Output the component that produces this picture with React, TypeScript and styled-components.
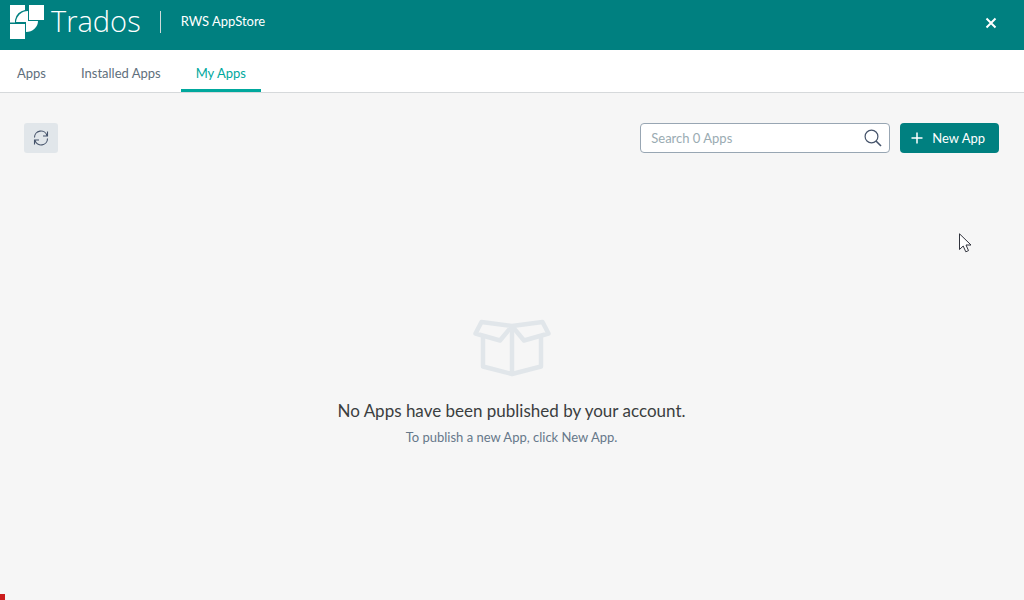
import React from "react";
import styled, { createGlobalStyle } from "styled-components";

const GlobalStyle = createGlobalStyle`
  *, *::before, *::after { box-sizing: border-box; }
  body {
    margin: 0;
    background: #f6f6f6;
    color: #3b3e40;
    font: 13px/20px Lato, "Liberation Sans", sans-serif;
  }
  button, input { font: inherit; }
`;

const Page = styled.div`
  display: flex;
  flex-direction: column;
  min-height: 100vh;
`;

const Header = styled.header`
  display: flex;
  align-items: center;
  height: 50px;
  padding: 0 24px 6px 10px;
  background: #008080;
  color: #fff;
`;

const Brand = styled.a`
  display: flex;
  align-items: center;
  gap: 7px;
  color: inherit;
  text-decoration: none;
  font: 400 28px/32px "Open Sans", sans-serif;
`;

const BrandName = styled.span`
  padding-bottom: 2px;
  font-weight: 350;
  font-size: 29px;
`;

const Divider = styled.span`
  width: 1px;
  height: 22px;
  margin: 0 20px 0 19px;
  background: #cfdada;
`;

const Product = styled.span`
  flex: 1;
  padding-bottom: 2px;
`;

const CloseButton = styled.button`
  display: flex;
  margin: 0;
  padding: 4px 2px 2px;
  border: 0;
  background: none;
  color: inherit;
  cursor: pointer;
`;

const Tabs = styled.nav`
  display: flex;
  gap: 5px;
  height: 43px;
  padding: 0 2px;
  background: #fff;
  border-bottom: 1px solid #d6d9db;
`;

const Tab = styled.a<{ $active?: boolean }>`
  display: flex;
  align-items: center;
  padding: 6px 15px 0;
  border-bottom: 3px solid ${(p) => (p.$active ? "#00a89d" : "transparent")};
  color: ${(p) => (p.$active ? "#00a89d" : "#5f6f7c")};
  text-decoration: none;
`;

const Toolbar = styled.div`
  display: flex;
  align-items: center;
  justify-content: space-between;
  padding: 30px 25px 0 24px;
`;

const RefreshButton = styled.button`
  display: flex;
  align-items: center;
  justify-content: center;
  width: 34px;
  height: 30px;
  padding: 0;
  border: 0;
  border-radius: 3px;
  background: #e1e6ea;
  color: #45536a;
`;

const Actions = styled.div`
  display: flex;
  gap: 10px;
`;

const SearchBox = styled.label`
  display: flex;
  align-items: center;
  width: 250px;
  height: 30px;
  padding: 0 7px 0 10px;
  border: 1px solid #98a6b3;
  border-radius: 4px;
  background: #fff;
  color: #45536a;
`;

const SearchInput = styled.input`
  flex: 1;
  min-width: 0;
  padding: 0;
  border: 0;
  outline: 0;
  background: none;
  &::placeholder { color: #9aabb2; opacity: 1; }
`;

const NewButton = styled.button`
  display: flex;
  align-items: center;
  gap: 9px;
  height: 30px;
  padding: 0 14px 0 11px;
  border: 0;
  border-radius: 4px;
  background: #008080;
  color: #fff;
`;

const Empty = styled.main`
  flex: 1;
  display: flex;
  flex-direction: column;
  align-items: center;
  padding: 166px 1px 0 0;
  text-align: center;
`;

const EmptyTitle = styled.h1`
  margin: 22px 0 4px;
  font-size: 17px;
  line-height: 24px;
  font-weight: 400;
`;

const EmptyHint = styled.p`
  margin: 0;
  color: #66788a;
`;

const Pointer = styled.svg`
  position: fixed;
  left: 959px;
  top: 233px;
  pointer-events: none;
`;

const Marker = styled.span`
  position: fixed;
  left: 0;
  bottom: 0;
  width: 5px;
  height: 6px;
  background: #cb1c1c;
`;

export default function App() {
  return (
    <Page>
      <GlobalStyle />
      <Header>
        <Brand href="#">
          <svg width="34" height="34" viewBox="0 0 34 34" fill="#fff" aria-hidden="true">
            <path d="M0 0H15V5A12 12 0 0 0 5 15V17.500H0Z" />
            <path d="M19 0H34V15H19Z" />
            <path d="M0 19H15V34H0Z" />
            <path d="M18 6V17H6A12 12 0 0 1 18 6Z" />
            <path d="M16 16H28A12 11 0 0 1 16 27Z" />
          </svg>
          <BrandName>Trados</BrandName>
        </Brand>
        <Divider />
        <Product>RWS AppStore</Product>
        <CloseButton aria-label="Close">
          <svg width="14" height="14" viewBox="0 0 14 14" fill="none" stroke="#fff" strokeWidth="2">
            <path d="M2.5 2.5L11.5 11.5M11.5 2.5L2.5 11.5" />
          </svg>
        </CloseButton>
      </Header>
      <Tabs>
        <Tab href="#apps">Apps</Tab>
        <Tab href="#installed">Installed Apps</Tab>
        <Tab href="#mine" $active aria-current="page">My Apps</Tab>
      </Tabs>
      <Toolbar>
        <RefreshButton aria-label="Refresh">
          <svg width="16" height="16" viewBox="0 0 16 16" fill="none" stroke="currentColor" strokeWidth="1.1">
            <path d="M1.5 7.5A6.4 6.4 0 0 1 14 5.5M14.5 1.5V6H10M14.5 8.5A6.4 6.4 0 0 1 2 10.5M1.5 14.5V10H6" />
          </svg>
        </RefreshButton>
        <Actions>
          <SearchBox>
            <SearchInput type="search" aria-label="Search apps" placeholder="Search 0 Apps" />
            <svg width="18" height="18" viewBox="0 0 18 18" fill="none" stroke="currentColor" strokeWidth="1.2" aria-hidden="true">
              <circle cx="7.5" cy="7.5" r="6.4" />
              <path d="M12 12L17 17" strokeWidth="1.6" />
            </svg>
          </SearchBox>
          <NewButton>
            <svg width="12" height="12" viewBox="0 0 12 12" fill="none" stroke="currentColor" strokeWidth="1.5" aria-hidden="true">
              <path d="M6 .5V11.5M.5 6H11.5" />
            </svg>
            New App
          </NewButton>
        </Actions>
      </Toolbar>
      <Empty>
        <svg width="78" height="58" viewBox="0 0 78 58" fill="none" stroke="#e1e6ea" strokeWidth="4.5" strokeLinejoin="round" aria-hidden="true">
          <path d="M8.500 3L39 7L27 21.500L2.500 14.500ZM69.500 3L39 7L51 21.500L75.500 14.500Z" />
          <path d="M10 17V47.500L39 55L68 47.500V17M39 7V55" />
        </svg>
        <EmptyTitle>No Apps have been published by your account.</EmptyTitle>
        <EmptyHint>To publish a new App, click New App.</EmptyHint>
      </Empty>
      <Pointer width="13" height="20" viewBox="0 0 13 20" fill="#fff" stroke="#30333c" aria-hidden="true">
        <path d="M.5 .8V16.500L4.200 13L6.800 18.800L9.500 17.600L7 12H12Z" />
      </Pointer>
      <Marker />
    </Page>
  );
}
